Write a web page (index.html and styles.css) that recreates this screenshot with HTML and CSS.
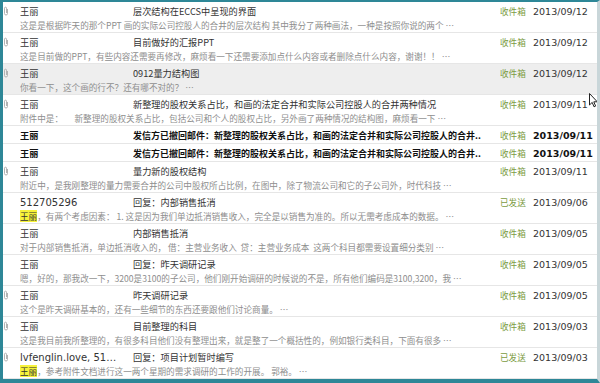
FILE: index.html
```html
<!DOCTYPE html>
<html lang="zh-CN">
<head>
<meta charset="utf-8">
<title>邮件列表</title>
<link rel="stylesheet" href="styles.css">
</head>
<body>
<div class="frame">
  <div class="list">
    <div class="row">
      <span class="clip"><svg viewBox="0 0 6 10" width="6" height="10"><path d="M4.5 3 V7.5 a1.5 1.5 0 0 1 -3 0 V2.2 a1 1 0 0 1 2 0 V7" fill="none" stroke="#b3b3b3" stroke-width="1"/></svg></span>
      <span class="name">王丽</span>
      <span class="subject">层次结构在ECCS中呈现的界面</span>
      <span class="folder">收件箱</span>
      <span class="date">2013/09/12</span>
      <span class="preview">这是是根据昨天的那个PPT 画的实际公司控股人的合井的层次结构 其中我分了两种画法，一种是按照你说的两个 …</span>
    </div>
    <div class="row">
      <span class="clip"><svg viewBox="0 0 6 10" width="6" height="10"><path d="M4.5 3 V7.5 a1.5 1.5 0 0 1 -3 0 V2.2 a1 1 0 0 1 2 0 V7" fill="none" stroke="#b3b3b3" stroke-width="1"/></svg></span>
      <span class="name">王丽</span>
      <span class="subject">目前做好的汇报PPT</span>
      <span class="folder">收件箱</span>
      <span class="date">2013/09/12</span>
      <span class="preview">这是目前做的PPT，有些内容还需要再修改，麻烦看一下还需要添加点什么内容或者删除点什么内容，谢谢！！ …</span>
    </div>
    <div class="row selected">
      <span class="clip"><svg viewBox="0 0 6 10" width="6" height="10"><path d="M4.5 3 V7.5 a1.5 1.5 0 0 1 -3 0 V2.2 a1 1 0 0 1 2 0 V7" fill="none" stroke="#b3b3b3" stroke-width="1"/></svg></span>
      <span class="name">王丽</span>
      <span class="subject">0912量力结构图</span>
      <span class="folder">收件箱</span>
      <span class="date">2013/09/12</span>
      <span class="preview">你看一下，这个画的行不？还有哪不对的？ …</span>
    </div>
    <div class="row">
      <span class="clip"><svg viewBox="0 0 6 10" width="6" height="10"><path d="M4.5 3 V7.5 a1.5 1.5 0 0 1 -3 0 V2.2 a1 1 0 0 1 2 0 V7" fill="none" stroke="#b3b3b3" stroke-width="1"/></svg></span>
      <span class="name">王丽</span>
      <span class="subject">新整理的股权关系占比，和画的法定合并和实际公司控股人的合并两种情况</span>
      <span class="folder">收件箱</span>
      <span class="date">2013/09/11</span>
      <span class="preview">附件中是：&nbsp;&nbsp;&nbsp;&nbsp;&nbsp;&nbsp;新整理的股权关系占比，包括公司和个人的股权占比，另外画了两种情况的结构图，麻烦看一下 …</span>
    </div>
    <div class="row single unread">
      <span class="clip"></span>
      <span class="name">王丽</span>
      <span class="subject">发信方已撤回邮件：新整理的股权关系占比，和画的法定合并和实际公司控股人的合井..</span>
      <span class="folder">收件箱</span>
      <span class="date">2013/09/11</span>
    </div>
    <div class="row single unread">
      <span class="clip"></span>
      <span class="name">王丽</span>
      <span class="subject">发信方已撤回邮件：新整理的股权关系占比，和画的法定合并和实际公司控股人的合井..</span>
      <span class="folder">收件箱</span>
      <span class="date">2013/09/11</span>
    </div>
    <div class="row">
      <span class="clip"><svg viewBox="0 0 6 10" width="6" height="10"><path d="M4.5 3 V7.5 a1.5 1.5 0 0 1 -3 0 V2.2 a1 1 0 0 1 2 0 V7" fill="none" stroke="#b3b3b3" stroke-width="1"/></svg></span>
      <span class="name">王丽</span>
      <span class="subject">量力新的股权结构</span>
      <span class="folder">收件箱</span>
      <span class="date">2013/09/11</span>
      <span class="preview">附近中，是我刚整理的量力需要合并的公司中股权所占比例，在图中，除了物流公司和它的子公司外，时代科技 …</span>
    </div>
    <div class="row">
      <span class="clip"></span>
      <span class="name latin">512705296</span>
      <span class="subject">回复：内部销售抵消</span>
      <span class="folder">已发送</span>
      <span class="date">2013/09/06</span>
      <span class="preview"><mark class="hl">王丽</mark>，有两个考虑因素： 1. 这是因为我们单边抵消销售收入，完全是以销售为准的。所以无需考虑成本的数据。 …</span>
    </div>
    <div class="row">
      <span class="clip"></span>
      <span class="name">王丽</span>
      <span class="subject">内部销售抵消</span>
      <span class="folder">收件箱</span>
      <span class="date">2013/09/05</span>
      <span class="preview">对于内部销售抵消，单边抵消收入的， 借：主营业务收入&nbsp;&nbsp;贷：主营业务成本&nbsp;&nbsp;这两个科目都需要设置细分类别 …</span>
    </div>
    <div class="row">
      <span class="clip"></span>
      <span class="name">王丽</span>
      <span class="subject">回复：昨天调研记录</span>
      <span class="folder">收件箱</span>
      <span class="date">2013/09/05</span>
      <span class="preview">嗯，好的，那我改一下，3200是3100的子公司，他们刚开始调研的时候说的不是，所有他们编码是3100,3200，我 …</span>
    </div>
    <div class="row">
      <span class="clip"><svg viewBox="0 0 6 10" width="6" height="10"><path d="M4.5 3 V7.5 a1.5 1.5 0 0 1 -3 0 V2.2 a1 1 0 0 1 2 0 V7" fill="none" stroke="#b3b3b3" stroke-width="1"/></svg></span>
      <span class="name">王丽</span>
      <span class="subject">昨天调研记录</span>
      <span class="folder">收件箱</span>
      <span class="date">2013/09/05</span>
      <span class="preview">这个是昨天调研基本的，还有一些细节的东西还要跟他们讨论商量。 …</span>
    </div>
    <div class="row">
      <span class="clip"><svg viewBox="0 0 6 10" width="6" height="10"><path d="M4.5 3 V7.5 a1.5 1.5 0 0 1 -3 0 V2.2 a1 1 0 0 1 2 0 V7" fill="none" stroke="#b3b3b3" stroke-width="1"/></svg></span>
      <span class="name">王丽</span>
      <span class="subject">目前整理的科目</span>
      <span class="folder">收件箱</span>
      <span class="date">2013/09/03</span>
      <span class="preview">这是我目前我所整理的，有很多科目他们没有整理出来，就是整了一个概括性的，例如银行类科目，下面有很多 …</span>
    </div>
    <div class="row">
      <span class="clip"><svg viewBox="0 0 6 10" width="6" height="10"><path d="M4.5 3 V7.5 a1.5 1.5 0 0 1 -3 0 V2.2 a1 1 0 0 1 2 0 V7" fill="none" stroke="#b3b3b3" stroke-width="1"/></svg></span>
      <span class="name latin">lvfenglin.love, 51…</span>
      <span class="subject">回复：项目计划暂时编写</span>
      <span class="folder">已发送</span>
      <span class="date">2013/09/03</span>
      <span class="preview"><mark class="hl">王丽</mark>，参考附件文档进行这一两个星期的需求调研的工作的开展。 郭裕。 …</span>
    </div>
  </div>
  <svg class="cursor" viewBox="0 0 9 15" width="9" height="15"><path d="M0.5 0.5 V12 L3.2 9.4 L5 13.8 L6.6 13.1 L4.8 8.8 H8.3 Z" fill="#fff" stroke="#222" stroke-width="1" stroke-linejoin="round"/></svg>
</div>
</body>
</html>
```

FILE: styles.css
```css
html, body {
  margin: 0;
  padding: 0;
  background: #ffffff;
}

.frame {
  position: relative;
  width: 600px;
  height: 383px;
  box-sizing: border-box;
  border-top: 2px solid #2e8797;
  border-left: 3px solid #2e8797;
  border-right: 3px solid #c9d6d9;
  border-bottom: 4px solid #2e8797;
  overflow: hidden;
  background: #ffffff;
  font-family: "Noto Sans CJK SC", "Liberation Sans", sans-serif;
  font-size: 9.2px;
  color: #333333;
}

.list {
  display: flex;
  flex-direction: column;
}

.row {
  display: grid;
  grid-template-columns: 17px 113px 1fr 33px 64px;
  grid-template-rows: 14px 14px;
  height: 31px;
  box-sizing: border-box;
  padding-top: 2px;
  border-bottom: 1px solid #e6e6e6;
  align-items: center;
  white-space: nowrap;
}

.row.single {
  grid-template-rows: 14px;
  height: 18px;
}

.row.selected {
  background: #eeeeee;
}

.clip {
  grid-column: 1;
  grid-row: 1;
  display: flex;
  align-items: center;
  height: 14px;
}

.clip svg {
  display: block;
}

.name {
  grid-column: 2;
  grid-row: 1;
  overflow: hidden;
  color: #333333;
}

.name.latin {
  font-family: "DejaVu Sans", "Noto Sans CJK SC", sans-serif;
  font-size: 10px;
}

.subject {
  grid-column: 3;
  grid-row: 1;
  overflow: hidden;
  padding-right: 2px;
  color: #333333;
}

.folder {
  grid-column: 4;
  grid-row: 1;
  color: #7b9b3f;
  font-size: 8.6px;
}

.date {
  grid-column: 5;
  grid-row: 1;
  font-family: "DejaVu Sans", "Liberation Sans", sans-serif;
  font-size: 9.5px;
  color: #333333;
}

.preview {
  grid-column: 2 / 5;
  grid-row: 2;
  overflow: hidden;
  font-size: 8.6px;
  color: #8e8e8e;
}

.unread .name,
.unread .subject,
.unread .date {
  font-weight: bold;
  color: #111111;
}

.unread .subject {
  font-size: 9px;
}

.hl {
  background: #f6f23a;
  color: #333333;
  padding: 0;
}

.cursor {
  position: absolute;
  left: 586px;
  top: 91px;
}
```
